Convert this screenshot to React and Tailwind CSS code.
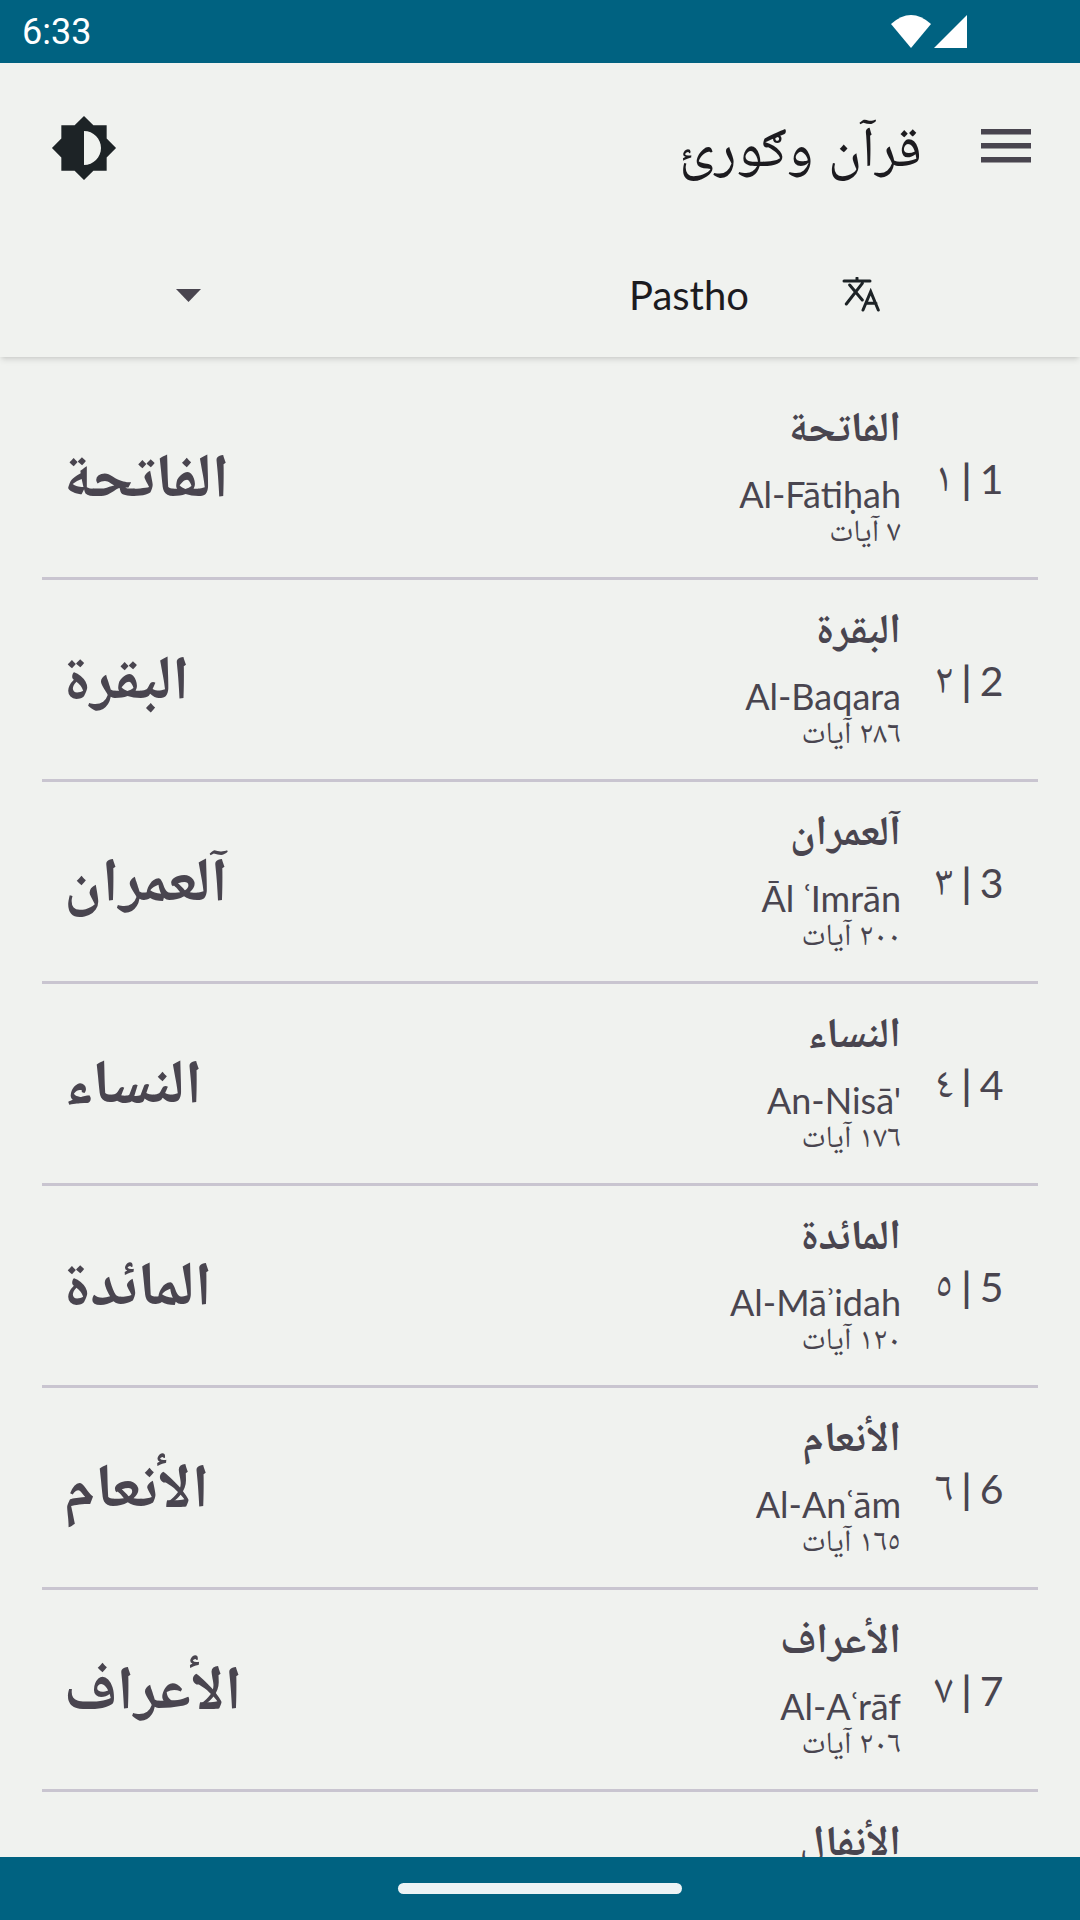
const SURAHS = [
  { num: 1, ar: '١', name: 'الفاتحة', latin: 'Al-Fātiḥah', ayat: '٧ آيات' },
  { num: 2, ar: '٢', name: 'البقرة', latin: 'Al-Baqara', ayat: '٢٨٦ آيات' },
  { num: 3, ar: '٣', name: 'آلعمران', latin: 'Āl ʿImrān', ayat: '٢٠٠ آيات' },
  { num: 4, ar: '٤', name: 'النساء', latin: "An-Nisā'", ayat: '١٧٦ آيات' },
  { num: 5, ar: '٥', name: 'المائدة', latin: 'Al-Māʾidah', ayat: '١٢٠ آيات' },
  { num: 6, ar: '٦', name: 'الأنعام', latin: 'Al-Anʿām', ayat: '١٦٥ آيات' },
  { num: 7, ar: '٧', name: 'الأعراف', latin: 'Al-Aʿrāf', ayat: '٢٠٦ آيات' },
  { num: 8, ar: '٨', name: 'الأنفال', latin: 'Al-Anfāl', ayat: '٧٥ آيات' },
]

function SurahRow({ surah }) {
  return (
    <div className="h-[202px] shrink-0 mx-[42px] border-b-[3px] border-[#c9c5d0] flex items-center text-[#49454f]">
      <div className="flex-1 pl-[22px] pb-[10px] text-[62px] leading-[80px] font-bold text-left" dir="rtl">
        {surah.name}
      </div>
      <div className="flex flex-col items-end pb-[8px] -mr-[1px]">
        <div className="text-[42px] font-bold leading-[40px]" dir="rtl">{surah.name}</div>
        <div className="text-[36px] leading-[42px] mt-[28px]">{surah.latin}</div>
        <div className="text-[31px] leading-[28px]" dir="rtl">{surah.ayat}</div>
      </div>
      <div className="w-[138px] pt-[2px] flex items-center justify-center text-[41px] leading-[50px] whitespace-nowrap">
        <span className="text-[42px] -mt-[8px]">{surah.ar}</span>
        <span className="mx-[8px] font-semibold">|</span>
        <span>{surah.num}</span>
      </div>
    </div>
  )
}

export default function App() {
  return (
    <div className="w-[1080px] h-[1920px] flex flex-col overflow-hidden bg-[#f0f2ef] font-['Lato','Noto_Naskh_Arabic','DejaVu_Sans',sans-serif]">
      {/* status bar */}
      <div className="h-[63px] bg-[#006281] shrink-0 flex items-center pl-[22px] pr-[113px] justify-between text-white font-['Roboto',sans-serif] text-[36px]">
        <span>6:33</span>
        <div className="flex items-center gap-[3px]">
          <svg width="40" height="33" viewBox="0 0 40 33" fill="white"><path d="M0 9 Q20 -9 40 9 L20 33 Z" /></svg>
          <svg width="33" height="33" viewBox="0 0 33 33" fill="white"><path d="M33 0 V33 H0 Z" /></svg>
        </div>
      </div>

      {/* header */}
      <div className="h-[294px] shrink-0 shadow-md relative z-10 bg-[#f0f2ef] flex flex-col">
        <div className="h-[170px] flex items-center justify-between pl-[50px] pr-[49px] text-[#1c1b1f]">
          <svg width="68" height="68" viewBox="0 0 24 24" fill="#1d2326">
            <path d="M20 15.31 23.31 12 20 8.69V4h-4.69L12 .69 8.69 4H4v4.69L.69 12 4 15.31V20h4.69L12 23.31 15.31 20H20v-4.69zM12 18V6c3.31 0 6 2.69 6 6s-2.69 6-6 6z" />
          </svg>
          <div className="flex items-center gap-[59px]">
            <span className="text-[57px] leading-[70px] -mt-[8px]" dir="rtl">قرآن وګورئ</span>
            <svg className="-mt-[4px]" width="50" height="34" viewBox="0 0 50 34" fill="#49454f">
              <rect width="50" height="5.500" y="0" /><rect width="50" height="5.500" y="14" /><rect width="50" height="5.500" y="28" />
            </svg>
          </div>
        </div>
        <div className="h-[124px] flex items-center text-[#1c1b1f]">
          <div className="w-[201px] flex justify-end">
            <svg width="25" height="13" viewBox="0 0 25 13" fill="#49454f"><path d="M0 0H25L12.500 13Z" /></svg>
          </div>
          <span className="ml-[428px] text-[40px]">Pastho</span>
          <svg className="ml-[93px]" width="40" height="36" viewBox="0 0 40 36" fill="none" stroke="#1d2326" strokeWidth="3" strokeLinecap="round">
            <path d="M2 4H28M15 1V4M7.700 8L20.300 23M20.300 6.300L4.300 27M21 33L28.700 14.700L36.300 33M24 26.300H34" />
          </svg>
        </div>
      </div>

      {/* list */}
      <div className="flex-1 min-h-0 overflow-hidden flex flex-col pt-[21px]">
        {SURAHS.map(s => <SurahRow key={s.num} surah={s} />)}
      </div>

      {/* nav bar */}
      <div className="h-[63px] bg-[#006281] shrink-0 flex items-center justify-center">
        <div className="w-[284px] h-[11px] rounded-full bg-[#ecf3f5]" />
      </div>
    </div>
  )
}
